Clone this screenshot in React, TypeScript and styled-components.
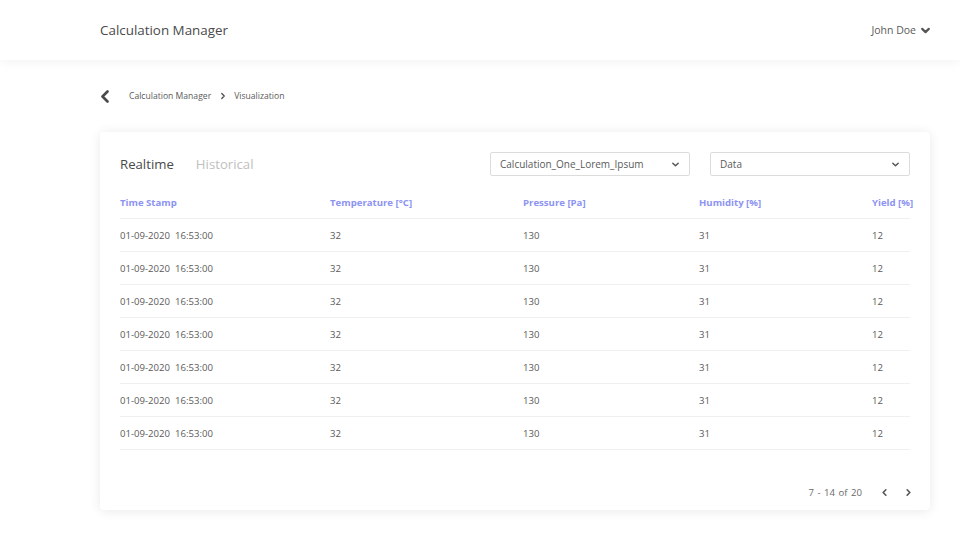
import styled, { createGlobalStyle } from 'styled-components';

const GlobalStyle = createGlobalStyle`
  html, body {
    margin: 0;
    padding: 0;
    background: #ffffff;
    font-family: 'Open Sans', 'Noto Sans', sans-serif;
    color: #5a5a5a;
  }
`;

const Header = styled.header`
  height: 60px;
  display: flex;
  align-items: center;
  justify-content: space-between;
  padding: 0 29px 0 100px;
  background: #ffffff;
  box-shadow: 0 2px 10px rgba(0, 0, 0, 0.05);
`;

const AppTitle = styled.div`
  font-size: 13.4px;
  color: #4a4a4a;
  margin-top: -1px;
`;

const UserMenu = styled.div`
  display: flex;
  align-items: center;
  gap: 4px;
  font-size: 10.5px;
  color: #5a5a5a;
`;

const Main = styled.main`
  padding: 26px 30px 24px 100px;
`;

const Breadcrumbs = styled.nav`
  display: flex;
  align-items: center;
  height: 20px;
  font-size: 8.6px;
  color: #5a5a5a;
`;

const BackButton = styled.span`
  display: flex;
  align-items: center;
  margin-right: 19px;
`;

const Crumb = styled.span`
  display: flex;
  align-items: center;
`;

const CrumbSep = styled.span`
  display: flex;
  align-items: center;
  margin: 0 7px 0 8px;
`;

const Card = styled.section`
  margin-top: 26px;
  background: #ffffff;
  border-radius: 4px;
  box-shadow: 0 1px 12px rgba(0, 0, 0, 0.09);
  padding: 20px 20px 6px 20px;
`;

const Toolbar = styled.div`
  display: flex;
  align-items: center;
  height: 24px;
`;

const Tabs = styled.div`
  display: flex;
  align-items: center;
  gap: 22px;
  flex: 1;
`;

const Tab = styled.span<{ active?: boolean }>`
  font-size: 13.2px;
  color: ${({ active }) => (active ? '#4a4a4a' : '#c0c0c0')};
  cursor: pointer;
`;

const Select = styled.div<{ w: number }>`
  width: ${({ w }) => w}px;
  height: 24px;
  box-sizing: border-box;
  border: 1px solid #dcdcdc;
  border-radius: 2px;
  display: flex;
  align-items: center;
  justify-content: space-between;
  padding: 0 9px;
  font-size: 10px;
  color: #5a5a5a;
  margin-left: 20px;
`;

const Table = styled.div`
  margin-top: 11px;
  width: 790px;
`;

const Row = styled.div<{ head?: boolean }>`
  display: grid;
  grid-template-columns: 210px 193px 176px 173px 1fr;
  align-items: center;
  height: 33px;
  box-sizing: border-box;
  border-bottom: 1px solid #f0f0f0;
  font-size: 9.6px;
  white-space: nowrap;
  ${({ head }) =>
    head
      ? `
    height: 32px;
    font-weight: 700;
    color: #8c93f2;
  `
      : `
    color: #5a5a5a;
  `}
`;

const Pagination = styled.div`
  display: flex;
  align-items: center;
  justify-content: flex-end;
  height: 24px;
  margin-top: 30px;
  margin-right: -3px;
  gap: 15px;
  font-size: 9.6px;
  color: #6a6a6a;
`;

const PageInfo = styled.span`
  margin-right: 3px;
  word-spacing: 1px;
`;

const PageButton = styled.span`
  display: flex;
  align-items: center;
  cursor: pointer;
`;

const Chevron = ({ dir, size = 8, stroke = 1.6 }: { dir: 'down' | 'left' | 'right'; size?: number; stroke?: number }) => {
  const d = dir === 'down' ? 'M2 3.5 L5 6.5 L8 3.5' : dir === 'left' ? 'M6.5 2 L3.5 5 L6.5 8' : 'M3.5 2 L6.5 5 L3.5 8';
  return (
    <svg width={size} height={size} viewBox="0 0 10 10" fill="none">
      <path d={d} stroke="#555" strokeWidth={stroke} strokeLinecap="round" strokeLinejoin="round" />
    </svg>
  );
};

const BackIcon = () => (
  <svg width="10" height="13" viewBox="0 0 10 13" fill="none">
    <path d="M7.5 1.5 L2.5 6.5 L7.5 11.5" stroke="#4a4a4a" strokeWidth="2.6" strokeLinecap="round" strokeLinejoin="round" />
  </svg>
);

const rows = Array.from({ length: 7 }, () => ({
  time: '01-09-2020\u00a0\u00a016:53:00',
  temp: 32,
  pressure: 130,
  humidity: 31,
  yieldPct: 12,
}));

export default function App() {
  return (
    <>
      <GlobalStyle />
      <Header>
        <AppTitle>Calculation Manager</AppTitle>
        <UserMenu>
          John Doe
          <Chevron dir="down" size={11} stroke={2} />
        </UserMenu>
      </Header>
      <Main>
        <Breadcrumbs>
          <BackButton>
            <BackIcon />
          </BackButton>
          <Crumb>Calculation Manager</Crumb>
          <CrumbSep>
            <Chevron dir="right" size={8} stroke={1.8} />
          </CrumbSep>
          <Crumb>Visualization</Crumb>
        </Breadcrumbs>
        <Card>
          <Toolbar>
            <Tabs>
              <Tab active>Realtime</Tab>
              <Tab>Historical</Tab>
            </Tabs>
            <Select w={200}>
              Calculation_One_Lorem_Ipsum
              <Chevron dir="down" size={9} />
            </Select>
            <Select w={200}>
              Data
              <Chevron dir="down" size={9} />
            </Select>
          </Toolbar>
          <Table>
            <Row head>
              <span>Time Stamp</span>
              <span>Temperature [°C]</span>
              <span>Pressure [Pa]</span>
              <span>Humidity [%]</span>
              <span>Yield [%]</span>
            </Row>
            {rows.map((r, i) => (
              <Row key={i}>
                <span>{r.time}</span>
                <span>{r.temp}</span>
                <span>{r.pressure}</span>
                <span>{r.humidity}</span>
                <span>{r.yieldPct}</span>
              </Row>
            ))}
          </Table>
          <Pagination>
            <PageInfo>7 - 14 of 20</PageInfo>
            <PageButton>
              <Chevron dir="left" size={9} stroke={1.8} />
            </PageButton>
            <PageButton>
              <Chevron dir="right" size={9} stroke={1.8} />
            </PageButton>
          </Pagination>
        </Card>
      </Main>
    </>
  );
}
